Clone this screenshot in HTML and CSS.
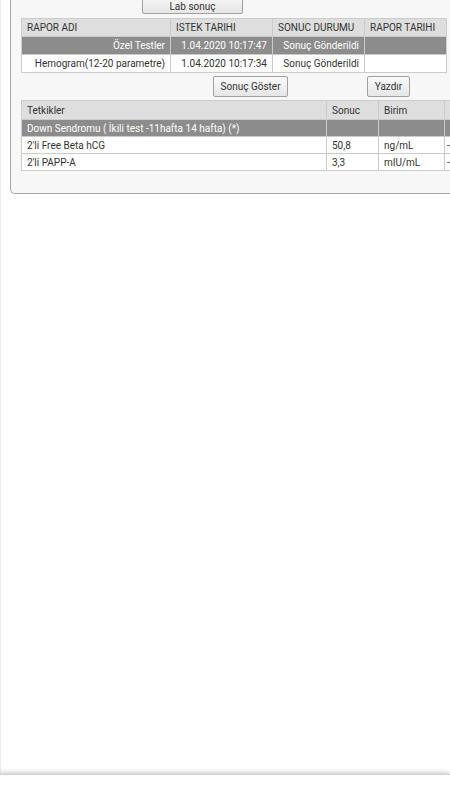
FILE: index.html
```html
<!DOCTYPE html>
<html lang="tr">
  <head>
    <meta charset="UTF-8" />
    <meta name="viewport" content="width=device-width, initial-scale=1, minimum-scale=1">
    <title>Lab sonuç</title>
    <link rel="stylesheet" href="styles.css">
  </head>
  <body>
    <div class="page">
      <div class="panel">
        <div class="tab_row">
          <button class="btn btn_tab">Lab sonuç</button>
        </div>
        <table class="grid rapor_grid">
          <colgroup>
            <col style="width:149px">
            <col style="width:102px">
            <col style="width:92px">
            <col style="width:82px">
          </colgroup>
          <tr class="head">
            <td>RAPOR ADI</td>
            <td>ISTEK TARIHI</td>
            <td>SONUC DURUMU</td>
            <td>RAPOR TARIHI</td>
          </tr>
          <tr class="selected">
            <td>Özel Testler</td>
            <td>1.04.2020 10:17:47</td>
            <td>Sonuç Gönderildi</td>
            <td></td>
          </tr>
          <tr>
            <td>Hemogram(12-20 parametre)</td>
            <td>1.04.2020 10:17:34</td>
            <td>Sonuç Gönderildi</td>
            <td></td>
          </tr>
        </table>
        <div class="btn_row">
          <button class="btn btn_show">Sonuç Göster</button>
          <button class="btn btn_print">Yazdır</button>
        </div>
        <table class="grid tetkik_grid">
          <colgroup>
            <col style="width:305px">
            <col style="width:52px">
            <col style="width:66px">
            <col style="width:60px">
          </colgroup>
          <tr class="head">
            <td>Tetkikler</td>
            <td>Sonuc</td>
            <td>Birim</td>
            <td></td>
          </tr>
          <tr class="selected">
            <td>Down Sendromu ( İkili test -11hafta 14 hafta) (*)</td>
            <td></td>
            <td></td>
            <td></td>
          </tr>
          <tr>
            <td>2'li Free Beta hCG</td>
            <td>50,8</td>
            <td>ng/mL</td>
            <td class="ref">-</td>
          </tr>
          <tr>
            <td>2'li PAPP-A</td>
            <td>3,3</td>
            <td>mIU/mL</td>
            <td class="ref">-</td>
          </tr>
        </table>
      </div>
    </div>
    <div class="bottom_bar"></div>
  </body>
</html>
```

FILE: styles.css
```css
* {padding:0; margin:0; box-sizing: border-box;}
html, body {height: 100%;}
body {background: #fff; font-family: Roboto, "Liberation Sans", sans-serif; font-size: 10px; color: #333; overflow: hidden;}
.page {min-height: 100%; border-left: 1px solid #ececec; width: 450px;}
.panel {margin-left: 9px; width: 540px; padding: 0 0 22px 10px; background: #f7f7f7; border: 1px solid #a8a8a8; border-top: none; border-right: none; border-radius: 0 0 0 5px;}
.btn {font-family: Roboto, "Liberation Sans", sans-serif; font-size: 10px; color: #333; background: linear-gradient(#fafafa, #e6e6e6); border: 1px solid #a0a0a0; border-radius: 2px; cursor: pointer;}
.tab_row {margin-top: -7px; padding-left: 121px; height: 21px; display: flex; align-items: flex-end;}
.btn_tab {width: 101px; height: 21px; padding-top: 5px; border-radius: 0 0 2px 2px;}
.grid {border-collapse: collapse; table-layout: fixed; background: #fff;}
.grid td {border: 1px solid #cbcbcb; padding: 0 5px; white-space: nowrap; overflow: hidden;}
.grid .head td {background: #dedede; text-align: left; color: #333;}
.grid .selected td {background: #8c8c8c; color: #fff;}
.rapor_grid {width: 425px; margin-top: 4px;}
.rapor_grid td {height: 18px; text-align: right;}
.btn_row {display: flex; height: 21px; margin: 3px 0; padding-left: 192px;}
.btn_show {width: 75px;}
.btn_print {width: 43px; margin-left: 79px;}
.tetkik_grid {width: 483px;}
.tetkik_grid td {height: 17px; text-align: left;}
.tetkik_grid .head td {height: 19px;}
.tetkik_grid td.ref {padding: 0 0 0 2px;}
.bottom_bar {position: fixed; left: 0; bottom: 0; width: 100%; height: 26px; background: #fff; box-shadow: 0 -2px 4px rgba(0,0,0,0.18); border-top: 1px solid #d0d0d0;}
```
